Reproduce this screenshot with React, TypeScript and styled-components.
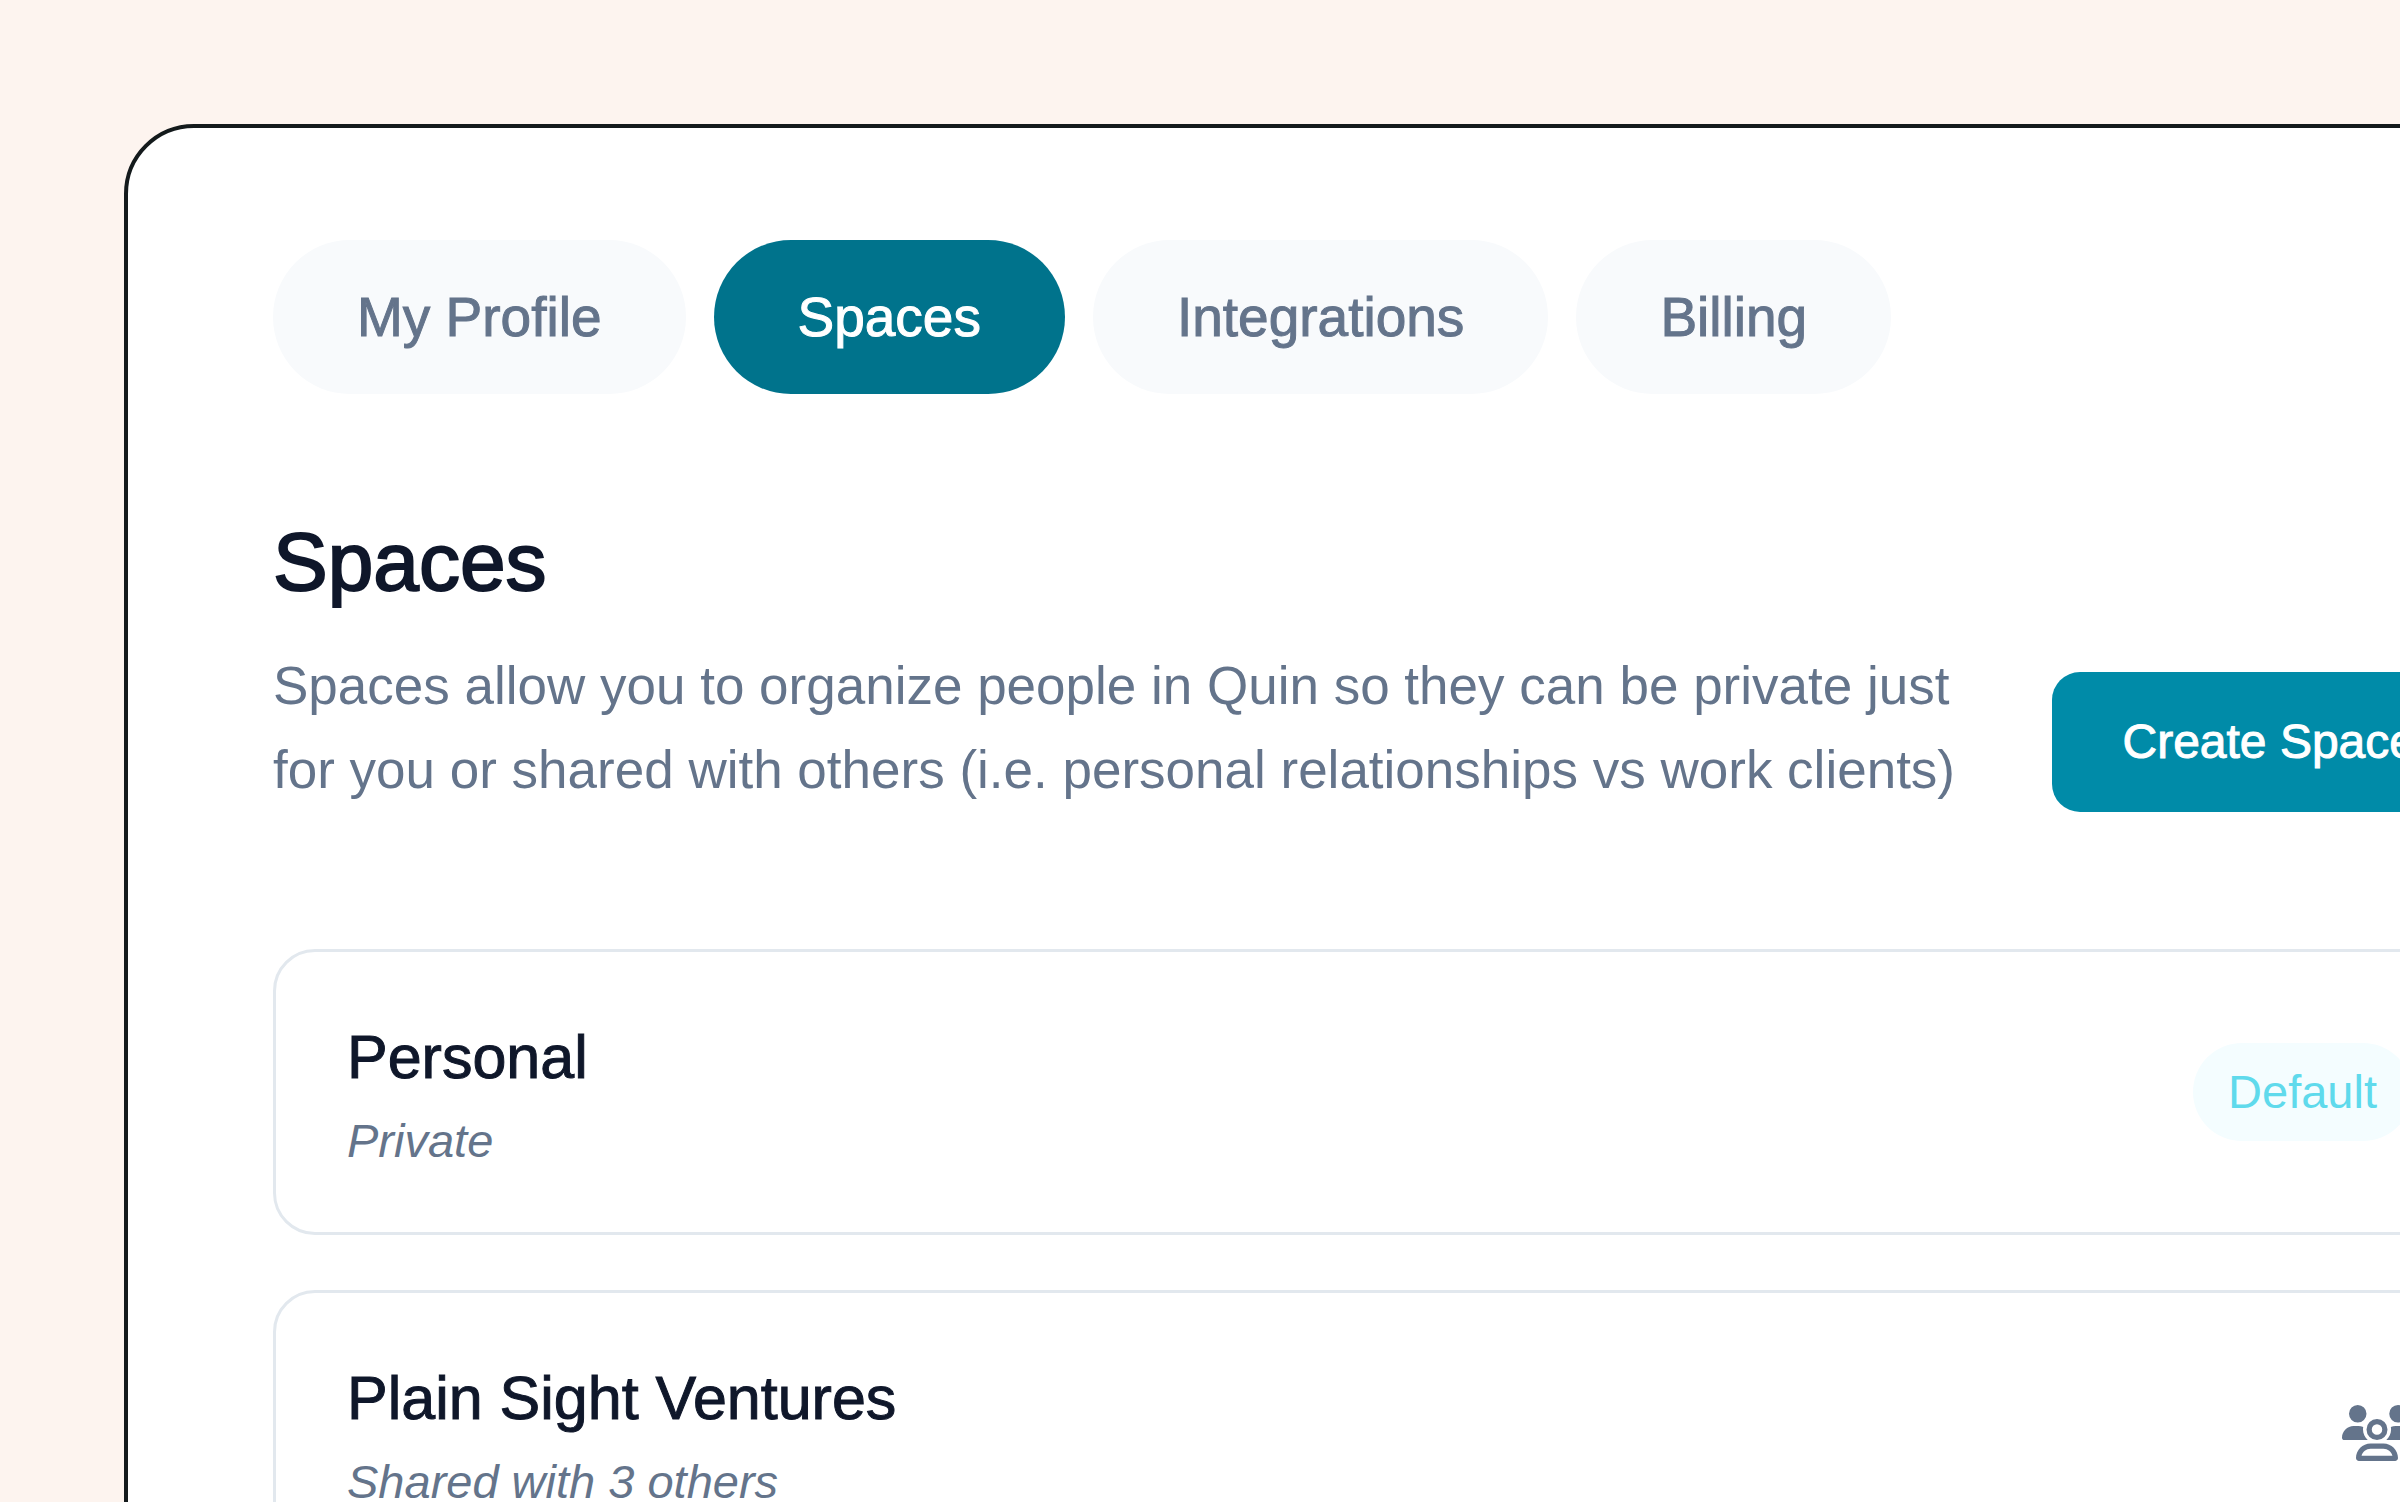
import React, { useState } from "react";
import styled, { createGlobalStyle } from "styled-components";

const colors = {
  page: "#fdf4ef",
  surface: "#ffffff",
  outline: "#141a1c",
  line: "#e2e8ee",
  ink: "#0f172a",
  muted: "#64748b",
  tab: "#f8fafc",
  tabActive: "#00738c",
  primary: "#008ba8",
  badge: "#f4fdff",
  badgeText: "#5fdaec",
};

const GlobalStyle = createGlobalStyle`
  *, *::before, *::after { box-sizing: border-box; }
  html, body { margin: 0; overflow: hidden; }
  body {
    background: ${colors.page};
    color: ${colors.ink};
    font-family: "Liberation Sans", Arial, Helvetica, sans-serif;
  }
  h1, h2, p, ul { margin: 0; padding: 0; font-weight: 400; }
`;

/* The settings sheet is larger than the viewport and runs off its right and bottom edges. */
const Page = styled.div`
  margin-right: -359px;
  padding: 124px;
`;

const Sheet = styled.main`
  padding: 112px 145px;
  background: ${colors.surface};
  border: 4px solid ${colors.outline};
  border-radius: 70px;
`;

const Tabs = styled.nav`
  display: flex;
  gap: 28px;
`;

const Tab = styled.button<{ $active: boolean }>`
  padding: 35px 84px;
  border: 0;
  border-radius: 77px;
  background: ${(p) => (p.$active ? colors.tabActive : colors.tab)};
  color: ${(p) => (p.$active ? colors.surface : colors.muted)};
  font: 400 55px/84px "Liberation Sans", Arial, sans-serif;
  -webkit-text-stroke: 1px currentColor;
  white-space: nowrap;
  cursor: pointer;
`;

const Header = styled.header`
  margin: 112px 0 137px;
`;

const Title = styled.h1`
  margin-bottom: 26px;
  font-size: 82px;
  line-height: 112px;
  -webkit-text-stroke: 2px currentColor;
`;

const Intro = styled.div`
  display: flex;
  align-items: flex-end;
  justify-content: space-between;
`;

const Description = styled.p`
  color: ${colors.muted};
  font-size: 53px;
  line-height: 84px;
  white-space: nowrap;
`;

const PrimaryButton = styled.button`
  padding: 35px 70px;
  border: 0;
  border-radius: 28px;
  background: ${colors.primary};
  color: ${colors.surface};
  font: 400 48px/70px "Liberation Sans", Arial, sans-serif;
  -webkit-text-stroke: 1px currentColor;
  white-space: nowrap;
  cursor: pointer;
`;

const SpaceList = styled.ul`
  display: grid;
  gap: 55px;
  list-style: none;
`;

const SpaceRow = styled.li`
  display: flex;
  align-items: center;
  justify-content: space-between;
  padding: 56px 71px;
  border: 3px solid ${colors.line};
  border-radius: 42px;
`;

const SpaceName = styled.h2`
  font-size: 61px;
  line-height: 98px;
  -webkit-text-stroke: 1px currentColor;
`;

const SpaceAccess = styled.p`
  color: ${colors.muted};
  font-size: 47px;
  font-style: italic;
  line-height: 70px;
`;

const Badge = styled.span`
  padding: 14px 35px;
  border-radius: 49px;
  background: ${colors.badge};
  color: ${colors.badgeText};
  font-size: 47px;
  line-height: 70px;
`;

const MembersSvg = styled.svg`
  width: 70px;
  height: 56px;
  fill: ${colors.muted};
`;

function MembersIcon() {
  return (
    <MembersSvg viewBox="0 0 640 512" role="img" aria-label="Shared">
      <path d="M144 0a80 80 0 1 1 0 160A80 80 0 1 1 144 0zM512 0a80 80 0 1 1 0 160A80 80 0 1 1 512 0z" />
      <path d="M0 298.7C0 239.8 47.8 192 106.7 192h42.7c15.9 0 31 3.5 44.6 9.7c-1.3 7.2-1.9 14.7-1.9 22.3c0 38.2 16.8 72.5 43.3 96H21.3C9.6 320 0 310.4 0 298.7zM405.3 320c26.6-23.5 43.3-57.8 43.3-96c0-7.6-.7-15-1.9-22.3c13.6-6.3 28.7-9.7 44.6-9.7h42.7C592.2 192 640 239.8 640 298.7c0 11.8-9.6 21.3-21.3 21.3H405.3z" />
      <path
        fillRule="evenodd"
        d="M224 224a96 96 0 1 1 192 0 96 96 0 1 1-192 0zM368 224a48 48 0 1 0-96 0 48 48 0 1 0 96 0z"
      />
      <path
        fillRule="evenodd"
        d="M128 485.3C128 411.7 187.7 352 261.3 352H378.7C452.3 352 512 411.7 512 485.3c0 14.7-11.9 26.7-26.7 26.7H154.7c-14.7 0-26.7-11.9-26.7-26.7zM178.8 464H461.2C451.9 427 418.6 400 378.7 400H261.3C221.4 400 188.1 427 178.8 464z"
      />
    </MembersSvg>
  );
}

const tabs = ["My Profile", "Spaces", "Integrations", "Billing"];

const spaces = [
  { name: "Personal", access: "Private", isDefault: true },
  { name: "Plain Sight Ventures", access: "Shared with 3 others", isDefault: false },
];

export default function App() {
  const [active, setActive] = useState("Spaces");

  return (
    <>
      <GlobalStyle />
      <Page>
        <Sheet>
          <Tabs aria-label="Settings">
            {tabs.map((tab) => (
              <Tab
                key={tab}
                type="button"
                $active={tab === active}
                aria-current={tab === active ? "page" : undefined}
                onClick={() => setActive(tab)}
              >
                {tab}
              </Tab>
            ))}
          </Tabs>

          <Header>
            <Title>Spaces</Title>
            <Intro>
              <Description>
                Spaces allow you to organize people in Quin so they can be private just
                <br />
                for you or shared with others (i.e. personal relationships vs work clients)
              </Description>
              <PrimaryButton type="button">Create Space</PrimaryButton>
            </Intro>
          </Header>

          <SpaceList>
            {spaces.map((space) => (
              <SpaceRow key={space.name}>
                <div>
                  <SpaceName>{space.name}</SpaceName>
                  <SpaceAccess>{space.access}</SpaceAccess>
                </div>
                {space.isDefault ? <Badge>Default</Badge> : <MembersIcon />}
              </SpaceRow>
            ))}
          </SpaceList>
        </Sheet>
      </Page>
    </>
  );
}
